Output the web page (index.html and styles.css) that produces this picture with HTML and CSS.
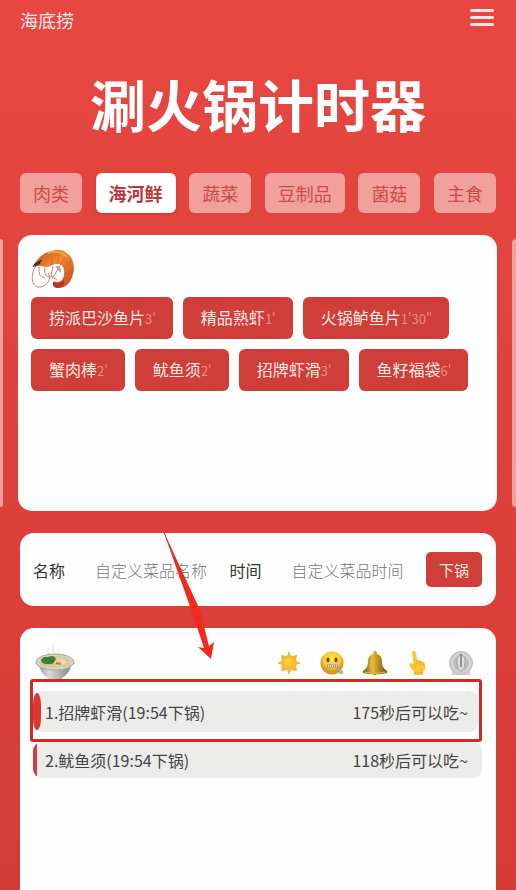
FILE: index.html
```html
<!DOCTYPE html>
<html lang="zh-CN">
<head>
<meta charset="utf-8">
<meta name="viewport" content="width=device-width, initial-scale=1">
<title>涮火锅计时器</title>
<link rel="stylesheet" href="styles.css">
</head>
<body>
<header class="topbar">
  <a class="brand" href="#">海底捞</a>
  <button class="menu" type="button" aria-label="菜单"><span></span><span></span><span></span></button>
</header>
<h1 class="title">涮火锅计时器</h1>
<nav class="tabs">
  <button class="tab" type="button">肉类</button>
  <button class="tab active" type="button">海河鲜</button>
  <button class="tab" type="button">蔬菜</button>
  <button class="tab" type="button">豆制品</button>
  <button class="tab" type="button">菌菇</button>
  <button class="tab" type="button">主食</button>
</nav>
<main class="main">
  <div class="carousel">
    <div class="peek peek-left"></div>
    <section class="card dishes">
      <svg class="shrimp" viewBox="0 0 44 40">
        <defs>
          <linearGradient id="shell" x1="0" y1="0" x2="1" y2="1"><stop offset="0" stop-color="#b94a1c"/><stop offset=".45" stop-color="#f08a30"/><stop offset="1" stop-color="#c8431a"/></linearGradient>
        </defs>
        <g fill="none" stroke="#c9827c" stroke-width="1">
          <path d="M5 17C-1 25 0 39 9 38C17 37 21 29 17 24"/>
          <path d="M8 18Q7 29 14 29M14 18Q12 29 20 28M22 17L20 27L26 31M29 17L21 30"/>
        </g>
        <path d="M3 16C7 7 18 0 29 1C40 3 45 14 42 25C40 34 34 40 26 39C22 38 21 34 23 32C28 35 33 31 33 25C34 18 30 14 24 15L17 18L8 17L1 18Z" fill="url(#shell)"/>
        <path d="M3 15L11 10L9 15L2 18Z" fill="#542924"/>
        <path d="M17 4Q23 9 20 16M25 2Q30 9 25 15M34 4Q34 11 29 16M40 11Q37 16 33 19M43 21L34 25M39 31L32 29" fill="none" stroke="#c45a25" stroke-width="1" opacity=".6"/>
        <path d="M17 4Q29 0 36 8" fill="none" stroke="#f9a64a" stroke-width="2"/>
        <path d="M22 33Q28 36 33 31Q34 39 26 39Q21 38 22 33" fill="#b8352a"/>
        <path d="M24 17Q28 16 30 20L30 24L27 21Z" fill="#c9a0aa"/>
      </svg>
      <div class="chips">
        <button class="chip" type="button">捞派巴沙鱼片<small>3'</small></button>
        <button class="chip" type="button">精品熟虾<small>1'</small></button>
        <button class="chip" type="button">火锅鲈鱼片<small>1'30"</small></button>
        <button class="chip" type="button">蟹肉棒<small>2'</small></button>
        <button class="chip" type="button">鱿鱼须<small>2'</small></button>
        <button class="chip" type="button">招牌虾滑<small>3'</small></button>
        <button class="chip" type="button">鱼籽福袋<small>6'</small></button>
      </div>
    </section>
    <div class="peek peek-right"></div>
  </div>

  <form class="card custom">
    <label for="dish">名称</label>
    <input id="dish" type="text" placeholder="自定义菜品名称">
    <label for="time">时间</label>
    <input id="time" type="text" placeholder="自定义菜品时间">
    <button class="submit" type="button">下锅</button>
    <svg class="arrow" viewBox="0 0 54 132">
      <path d="M1 1L38 81L47 117L52 113L49 130L36 118L42 119L31 86Z" fill="#f5281c"/>
      <path d="M1 1L24 58" stroke="#d13a32" stroke-width="1"/>
    </svg>
  </form>

  <section class="card timers">
    <div class="tools">
      <svg class="bowl" viewBox="0 0 42 38">
        <defs><linearGradient id="china" x1="0" x2="1"><stop offset="0" stop-color="#888986"/><stop offset=".35" stop-color="#dadbd8"/><stop offset="1" stop-color="#777976"/></linearGradient></defs>
        <path d="M15 10Q12 7 15 4M20 9Q17 5 20 1M25 10Q22 7 25 5" fill="none" stroke="#dedede" stroke-width="1"/>
        <path d="M1 19L5 22Q8 31 14 34V36Q21 39 28 36V34Q35 30 37 22L41 19Z" fill="url(#china)"/>
        <ellipse cx="21" cy="18" rx="19" ry="8" fill="#d7d7c8" stroke="#aaa99d"/>
        <ellipse cx="21" cy="18" rx="16" ry="6" fill="#d7c99b"/>
        <path d="M7 16Q9 12 14 13Q21 10 22 16Q20 21 14 20Q8 21 7 16" fill="#438633"/>
        <path d="M10 16L15 14L18 18M13 19L20 16" stroke="#286b27" fill="none"/>
        <path d="M20 18L24 13L28 16L25 21Z" fill="#f1cf99"/><path d="M27 15L33 18L28 21Z" fill="#eee4c5"/><path d="M22 19L27 20" stroke="#c67b43" stroke-width="2"/>
      </svg>
      <div class="actions">
        <button class="tool" type="button" aria-label="常亮">
          <svg viewBox="0 0 24 24"><path d="M12 0L14 5L20 4L19 10L24 12L19 14L20 20L14 19L12 24L10 19L4 20L5 14L0 12L5 10L4 4L10 5Z" fill="#edb04a"/><circle cx="12" cy="12" r="7" fill="#f9bd27"/><circle cx="11" cy="11" r="4" fill="#ffcf3b"/></svg>
        </button>
        <button class="tool" type="button" aria-label="静音">
          <svg viewBox="0 0 24 24"><defs><radialGradient id="face" cy=".35"><stop offset="0" stop-color="#ffe45b"/><stop offset=".7" stop-color="#fcca30"/><stop offset="1" stop-color="#d99b1d"/></radialGradient></defs><circle cx="12" cy="12" r="11.5" fill="url(#face)"/><ellipse cx="8" cy="9" rx="1.5" ry="2.4" fill="#704114"/><ellipse cx="16" cy="9" rx="1.5" ry="2.4" fill="#704114"/><path d="M6 15H18" stroke="#98948a" stroke-width="3"/><path d="M6 15H18" stroke="#ddd" stroke-width="2" stroke-dasharray="1 1"/><path d="M18 16L23 21L21 23L18 19Z" fill="#b9b8be" stroke="#99999f"/></svg>
        </button>
        <button class="tool" type="button" aria-label="铃声">
          <svg viewBox="0 0 24 24"><defs><linearGradient id="brass" x1="0" x2="1"><stop offset="0" stop-color="#795613"/><stop offset=".4" stop-color="#e3bd3c"/><stop offset=".65" stop-color="#b78c23"/><stop offset="1" stop-color="#735011"/></linearGradient></defs><circle cx="12" cy="22" r="2" fill="#77540f"/><path d="M10 3Q10 0 12 0Q14 0 14 3Q19 4 19 11Q19 17 24 20V22Q12 25 0 22V20Q5 17 5 11Q5 4 10 3Z" fill="url(#brass)"/><path d="M9 6Q7 11 7 18M1 21Q12 24 23 21" fill="none" stroke="#e0bb3d"/></svg>
        </button>
        <button class="tool" type="button" aria-label="触控">
          <svg viewBox="0 0 24 24"><path d="M8 14L6 2Q6 0 8 0Q10 0 10 2L11 9Q13 8 14 10Q16 9 17 11Q19 11 19 14V18Q18 20 17 21V24H8V21L4 16Q2 12 5 12L8 14Z" fill="#fdc538"/><path d="M8 12V15L10 17M11 9V13M14 10V14M17 12V15M8 22Q13 23 17 21" fill="none" stroke="#e2a02c" stroke-width=".8"/></svg>
        </button>
        <button class="tool" type="button" aria-label="计时">
          <svg viewBox="0 0 24 24"><path d="M4 18L2 24H22L20 18Z" fill="#d4d4d4"/><circle cx="12" cy="12" r="11.5" fill="#cfcfcf" stroke="#bbb"/><circle cx="12" cy="12" r="8.5" fill="#bdbdbd" stroke="#ddd"/><path d="M12 3Q7 6 8 12Q8 18 12 21Q16 18 16 12Q17 6 12 3Z" fill="#ddd" stroke="#a1a1a1"/><path d="M12 3V16" stroke="#777" stroke-width="1.5"/></svg>
        </button>
      </div>
    </div>
    <ol class="queue">
      <li class="item current"><span>1.招牌虾滑(19:54下锅)</span><span>175秒后可以吃~</span></li>
      <li class="item"><span>2.鱿鱼须(19:54下锅)</span><span>118秒后可以吃~</span></li>
    </ol>
  </section>
</main>
</body>
</html>
```
FILE: styles.css
```css
* { box-sizing: border-box; }
body {
  margin: 0;
  min-height: 100vh;
  display: flex;
  flex-direction: column;
  overflow-x: hidden;
  background: linear-gradient(#e74740, #d43b37);
  color: #333;
  font: 16px/24px "Noto Sans CJK SC", sans-serif;
}
button, input { font: inherit; border: 0; padding: 0; }
.topbar {
  display: flex;
  justify-content: space-between;
  align-items: flex-start;
  padding: 8px 22px 0 20px;
}
.brand { color: #ffe9e4; font-size: 18px; text-decoration: none; }
.menu {
  display: flex;
  flex-direction: column;
  gap: 4px;
  width: 24px;
  padding-top: 1px;
  background: none;
}
.menu span { height: 3px; border-radius: 2px; background: #ffe9e4; }
.title {
  margin: 36px 0;
  color: #fff;
  font-size: 56px;
  line-height: 69px;
  font-weight: 700;
  text-align: center;
}
.tabs { display: flex; justify-content: space-between; padding: 0 20px; }
.tab {
  height: 40px;
  padding: 0 13px;
  border-radius: 6px;
  background: #f2a09b;
  color: #c94c49;
  font-size: 18px;
}
.tab.active {
  background: #fff;
  color: #b8363a;
  font-weight: 700;
  box-shadow: 0 1px 3px #a82c2c80;
}
.main {
  flex: 1;
  display: flex;
  flex-direction: column;
  gap: 22px;
  padding-top: 22px;
}
.carousel { display: grid; grid-template-columns: 3px 1fr 4px; gap: 15px; }
.peek { margin: 4px 0; background: #f2a09b; }
.peek-left { border-radius: 0 4px 4px 0; }
.peek-right { border-radius: 4px 0 0 4px; }
.card { border-radius: 14px; background: #fefefe; }
.dishes { min-height: 276px; padding: 14px 13px; }
.shrimp { display: block; width: 44px; height: 40px; }
.chips { display: flex; flex-wrap: wrap; gap: 10px; margin-top: 8px; }
.chip {
  height: 42px;
  padding: 0 17px 0 18px;
  border-radius: 6px;
  background: #cf3e38;
  color: #ffe9e2;
}
.chip small { color: #f08d84; font-size: 13px; }
.custom {
  position: relative;
  display: flex;
  align-items: center;
  min-height: 73px;
  margin: 0 20px;
  padding: 0 14px 0 13px;
}
.custom label { flex: none; }
.custom input {
  flex: 1;
  min-width: 0;
  width: 0;
  margin-left: 30px;
  background: none;
  color: #333;
}
.custom input::placeholder { color: #777; font-weight: 300; opacity: 1; }
.submit {
  flex: none;
  width: 56px;
  height: 35px;
  border-radius: 5px;
  background: #cf3e38;
  color: #ffe9e2;
  font-size: 15px;
}
.arrow {
  position: absolute;
  z-index: 2;
  top: -4px;
  left: 142px;
  width: 54px;
  height: 132px;
  pointer-events: none;
}
.timers {
  flex: 1;
  margin: 0 20px;
  padding: 15px 14px 0 10px;
  border-radius: 14px 14px 0 0;
}
.tools {
  display: flex;
  justify-content: space-between;
  align-items: center;
  height: 40px;
  padding: 0 9px 0 4px;
}
.bowl { width: 42px; height: 38px; }
.actions { display: flex; gap: 19px; }
.tool { width: 24px; height: 24px; background: none; }
.tool svg { display: block; width: 24px; height: 24px; }
.queue {
  position: relative;
  display: flex;
  flex-direction: column;
  gap: 10px;
  margin: 0;
  padding: 8px 0 0 3px;
  list-style: none;
}
.item {
  position: relative;
  display: flex;
  justify-content: space-between;
  align-items: center;
  height: 36px;
  padding: 0 14px 0 12px;
  border-radius: 9px;
  background: linear-gradient(90deg, #c8403f 4px, #ececeb 4px);
  color: #444;
}
.item.current {
  height: 41px;
  margin-right: 4px;
  padding: 0 10px 0 12px;
  background: #ececeb;
}
.item.current::before {
  content: "";
  position: absolute;
  left: 0;
  top: 2px;
  bottom: 2px;
  width: 8px;
  border-radius: 4px / 12px;
  background: #dc3730;
}
.item.current::after {
  content: "";
  position: absolute;
  inset: -12px -4px -10px -3px;
  border: 3px solid #d32a22;
  border-radius: 3px;
}
```
